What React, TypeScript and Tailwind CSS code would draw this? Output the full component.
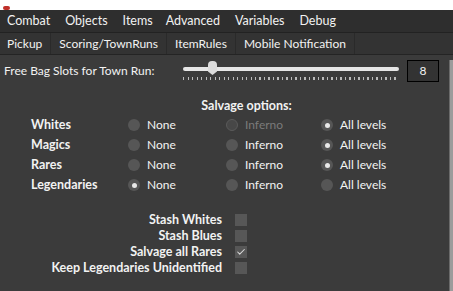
import { Check } from "lucide-react"

const topTabs = ["Combat", "Objects", "Items", "Advanced", "Variables", "Debug"]
const subTabs = ["Pickup", "Scoring/TownRuns", "ItemRules", "Mobile Notification"]

type Row = { label: string; selected: number; disabled?: number }

const rows: Row[] = [
  { label: "Whites", selected: 2, disabled: 1 },
  { label: "Magics", selected: 2 },
  { label: "Rares", selected: 2 },
  { label: "Legendaries", selected: 0 },
]
const options = ["None", "Inferno", "All levels"]
const widths = ["w-[98px]", "w-[95px]", "w-[80px]"]

const checks = [
  { label: "Stash Whites", on: false },
  { label: "Stash Blues", on: false },
  { label: "Salvage all Rares", on: true },
  { label: "Keep Legendaries Unidentified", on: false },
]

function Radio({ on, disabled }: { on: boolean; disabled?: boolean }) {
  return (
    <span
      className={
        disabled
          ? "w-[12px] h-[12px] rounded-full border border-[#5a5a5a] bg-[#474747] flex items-center justify-center"
          : "w-[12px] h-[12px] rounded-full bg-[#565656] flex items-center justify-center"
      }
    >
      {on && <span className="w-[5px] h-[5px] rounded-full bg-[#e8e8e8]" />}
    </span>
  )
}

export default function App() {
  return (
    <div className="w-[453px] h-[291px] overflow-hidden bg-[#3b3b3b] text-[#f2f2f2] text-[12px] font-['Lato',sans-serif] flex flex-col">
      <div className="h-[10px] bg-white flex items-end pl-[3px]">
        <span className="w-[7px] h-[4px] bg-[#c0302a] rounded-sm" />
      </div>
      <div className="h-[23px] bg-[#2e2e2e] border-b border-[#222] flex items-center pl-[7px] gap-[15px] text-[12.5px]">
        {topTabs.map((t) => (
          <span key={t} className={t === "Items" ? "mr-[-2px]" : ""}>{t}</span>
        ))}
      </div>
      <div className="h-[22px] bg-[#333333] border-b border-[#242424] flex items-stretch">
        {subTabs.map((t, i) => (
          <span
            key={t}
            className={(i === 0 ? "pl-[7px] pr-[8px]" : "px-[8px]") + " flex items-center border-r border-[#2a2a2a]"}
          >
            {t}
          </span>
        ))}
      </div>
      <div className="flex flex-1">
        <div className="flex-1 flex flex-col">
          <div className="flex items-center h-[30px] pl-[4px] pt-[2px]">
            <span className="w-[179px]">Free Bag Slots for Town Run:</span>
            <div className="w-[216px] relative h-[24px]">
              <div className="absolute left-0 right-0 top-[8px] h-[4px] rounded-full bg-[#e6e6e6]" />
              <div className="absolute left-[25px] top-[2px] w-[9px] h-[14px] bg-[#dcdcdc] rounded-t-sm [clip-path:polygon(0_0,100%_0,100%_75%,50%_100%,0_75%)]" />
              <div className="absolute left-0 right-0 bottom-[3px] h-[3px] bg-[repeating-linear-gradient(90deg,#bbb_0_1px,transparent_1px_4.5px)]" />
            </div>
            <div className="ml-[8px] w-[32px] h-[22px] border border-black bg-[#333] flex items-center justify-center">
              8
            </div>
          </div>
          <div className="font-bold text-[12.5px] text-center pl-[44px] mt-[12px] h-[18px]">Salvage options:</div>
          <div className="flex flex-col">
            {rows.map((r) => (
              <div key={r.label} className="h-[20px] flex items-center pl-[31px]">
                <span className="w-[97px] font-bold text-[12.5px]">{r.label}</span>
                {options.map((o, i) => (
                  <div key={o} className={"flex items-center gap-[7px] " + widths[i]}>
                    <Radio on={r.selected === i} disabled={r.disabled === i} />
                    <span className={r.disabled === i ? "text-[#7a7a7a]" : ""}>{o}</span>
                  </div>
                ))}
              </div>
            ))}
          </div>
          <div className="flex flex-col mt-[17px]">
            {checks.map((c) => (
              <div key={c.label} className="h-[16px] flex items-center">
                <span className="w-[222px] text-right font-bold text-[12.5px]">{c.label}</span>
                <span className="ml-[13px] w-[12px] h-[12px] bg-[#575757] flex items-center justify-center">
                  {c.on && <Check className="w-[10px] h-[10px] text-[#dcdcdc]" strokeWidth={2.5} />}
                </span>
              </div>
            ))}
          </div>
        </div>
        <div className="w-[4px] mt-[5px] bg-[#9c9c9c] border-l border-[#6a6a6a]" />
      </div>
    </div>
  )
}
